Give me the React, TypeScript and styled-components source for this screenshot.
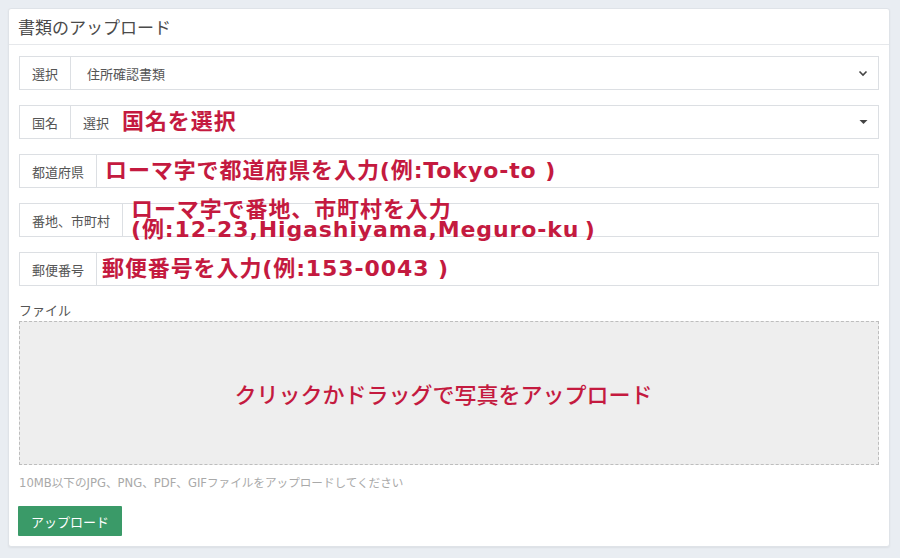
import styled, { createGlobalStyle } from 'styled-components';

const GlobalStyle = createGlobalStyle`
  html, body {
    margin: 0;
    padding: 0;
    background: #e9edf2;
  }
  body {
    font-family: "DejaVu Sans", "Noto Sans CJK JP", sans-serif;
    color: #555;
  }
`;

const Page = styled.div`
  padding: 8px 10px 10px 8px;
`;

const Panel = styled.section`
  background: #fff;
  border: 1px solid #dfe3e8;
  border-radius: 3px;
  box-shadow: 0 1px 2px rgba(0, 0, 0, 0.06);
`;

const PanelHeader = styled.header`
  height: 35px;
  display: flex;
  align-items: center;
  padding: 0 9px;
  border-bottom: 1px solid #e6e8eb;
  font-size: 17px;
  color: #4a4a4a;
`;

const PanelBody = styled.div`
  display: flex;
  flex-direction: column;
  padding: 11px 10px 10px 10px;
`;

const InputGroup = styled.div`
  display: flex;
  height: 34px;
  border: 1px solid #dcdfe3;
  box-sizing: border-box;
  background: #fff;
  margin-bottom: 15px;
`;

const Addon = styled.div`
  display: flex;
  align-items: center;
  padding: 0 12px;
  border-right: 1px solid #dcdfe3;
  font-size: 13px;
  color: #555;
  white-space: nowrap;
  background: #fff;
`;

const Field = styled.div<{ $indent: number }>`
  position: relative;
  flex: 1;
  display: flex;
  align-items: center;
  padding-left: ${p => p.$indent}px;
  font-size: 13px;
  color: #555;
  white-space: nowrap;
`;

// red annotation written over the inputs
const Note = styled.span<{ $gap?: number }>`
  margin-left: ${p => p.$gap || 0}px;
  font-size: 22px;
  line-height: 20px;
  font-weight: 700;
  color: #c41a3f;
  letter-spacing: 0.9px;
  white-space: pre-wrap;
`;

const Arrow = styled.span`
  position: absolute;
  right: 10px;
  top: 50%;
  transform: translateY(-50%);
  display: flex;
  color: #444;
`;

const FileLabel = styled.div`
  font-size: 13px;
  color: #555;
  margin-top: 1px;
  line-height: 18px;
  margin-bottom: 1px;
`;

const DropZone = styled.div`
  height: 144px;
  box-sizing: border-box;
  padding-right: 11px;
  background: #eeeeee;
  border: 1px dashed #bdbdbd;
  display: flex;
  align-items: center;
  justify-content: center;
`;

const DropText = styled.span`
  font-size: 22px;
  font-weight: 500;
  color: #c41a3f;
`;

const Hint = styled.p`
  margin: 9px 0 0;
  font-size: 11.6px;
  color: #a9a9a9;
`;

const UploadButton = styled.button`
  align-self: flex-start;
  margin-top: 16px;
  margin-left: -1px;
  height: 30px;
  width: 104px;
  border: none;
  border-radius: 1px;
  background: #3a9a68;
  color: #fff;
  font-family: inherit;
  font-size: 13px;
  cursor: pointer;
`;

const Chevron = () => (
  <svg width="10" height="8" viewBox="0 0 10 8">
    <path d="M1.5 2.5 L5 6 L8.5 2.5" fill="none" stroke="currentColor" strokeWidth="1.6" />
  </svg>
);

const Caret = () => (
  <svg width="9" height="6" viewBox="0 0 9 6">
    <path d="M0.5 1 H8.5 L4.5 5 Z" fill="currentColor" />
  </svg>
);

export default function App() {
  return (
    <>
      <GlobalStyle />
      <Page>
        <Panel>
          <PanelHeader>書類のアップロード</PanelHeader>
          <PanelBody>
            <InputGroup>
              <Addon>選択</Addon>
              <Field $indent={16}>
                住所確認書類
                <Arrow><Chevron /></Arrow>
              </Field>
            </InputGroup>
            <InputGroup>
              <Addon>国名</Addon>
              <Field $indent={12}>
                選択
                <Note $gap={13}>国名を選択</Note>
                <Arrow><Caret /></Arrow>
              </Field>
            </InputGroup>
            <InputGroup>
              <Addon>都道府県</Addon>
              <Field $indent={8}>
                <Note>ローマ字で都道府県を入力(例:Tokyo-to )</Note>
              </Field>
            </InputGroup>
            <InputGroup>
              <Addon>番地、市町村</Addon>
              <Field $indent={8}>
                <Note>{'ローマ字で番地、市町村を入力\n(例:12-23,Higashiyama,Meguro-ku\u2009)'}</Note>
              </Field>
            </InputGroup>
            <InputGroup>
              <Addon>郵便番号</Addon>
              <Field $indent={5}>
                <Note>郵便番号を入力(例:153-0043 )</Note>
              </Field>
            </InputGroup>
            <FileLabel>ファイル</FileLabel>
            <DropZone>
              <DropText>クリックかドラッグで写真をアップロード</DropText>
            </DropZone>
            <Hint>10MB以下のJPG、PNG、PDF、GIFファイルをアップロードしてください</Hint>
            <UploadButton>アップロード</UploadButton>
          </PanelBody>
        </Panel>
      </Page>
    </>
  );
}
